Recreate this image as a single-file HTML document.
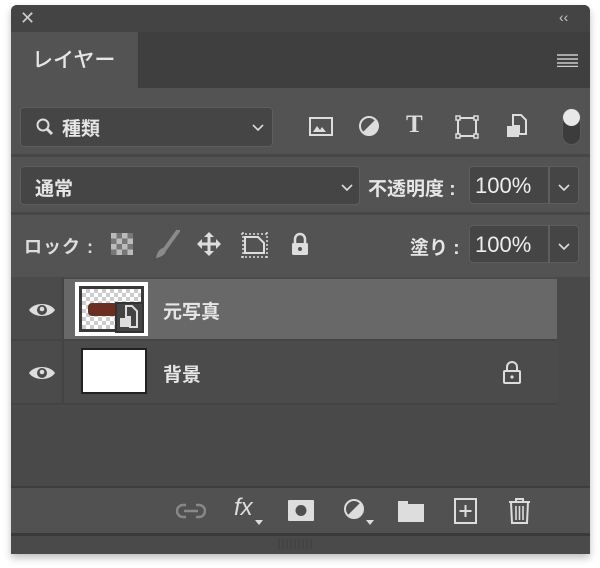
<!DOCTYPE html><html><head><meta charset="utf-8"><style>
*{margin:0;padding:0;box-sizing:border-box}
body{width:600px;height:568px;background:#fff;position:relative;overflow:hidden;font-family:"Liberation Sans","Noto Sans CJK JP",sans-serif;color:#e6e6e6}
.a{position:absolute}
.box{position:absolute;background:#454545;border:1px solid #5e5e5e;border-radius:4px}
.t{position:absolute;font-size:19px;white-space:nowrap;font-weight:500}
svg{position:absolute}
</style></head><body>
<div class="a" style="left:11px;top:5px;width:579px;height:549px;background:#535353;border-radius:6px 6px 0 0;box-shadow:0 4px 8px rgba(0,0,0,.25);overflow:hidden">
 <div class="a" style="left:0;top:0;width:579px;height:27px;background:#444"></div>
 <div class="a" style="left:0;top:27px;width:579px;height:56px;background:#3f3f3f"></div>
 <div class="a" style="left:0;top:27px;width:127px;height:57px;background:#535353"></div>
 <div class="a" style="left:0;top:149px;width:579px;height:3px;background:#474747"></div>
 <div class="a" style="left:0;top:207px;width:579px;height:3px;background:#474747"></div>
 <div class="a" style="left:0;top:272px;width:579px;height:210px;background:#4a494a"></div>
 <div class="a" style="left:0;top:272px;width:546px;height:130px;background:#4c4b4c"></div>
 <div class="a" style="left:53px;top:274px;width:493px;height:60px;background:#686868"></div>
 <div class="a" style="left:0;top:334px;width:546px;height:2px;background:#454445"></div>
 <div class="a" style="left:0;top:398px;width:546px;height:2px;background:#454445"></div>
 <div class="a" style="left:51px;top:272px;width:2px;height:128px;background:#454445"></div>
 <div class="a" style="left:0;top:481px;width:579px;height:50px;background:#525152;border-top:2px solid #3e3e3e;border-bottom:3px solid #3a3a3a"></div>
 <div class="a" style="left:0;top:531px;width:579px;height:18px;background:#4a4a4a"></div>
</div>
<div class="t" style="left:20px;top:8px;font-size:18px;color:#ccc">✕</div>
<div class="t" style="left:559px;top:9px;font-size:14px;color:#ccc">‹‹</div>
<div class="t" style="left:32px;top:44px;font-size:21px">レイヤー</div>
<svg style="left:557px;top:54px" width="21" height="13"><g stroke="#ccc" stroke-width="1.5"><path d="M0 1h21M0 5h21M0 9h21M0 12.5h21"/></g></svg>

<div class="box" style="left:20px;top:107px;width:253px;height:40px"></div>
<svg style="left:35px;top:117px" width="20" height="20"><circle cx="8" cy="8" r="5.5" fill="none" stroke="#ddd" stroke-width="2"/><path d="M12 12l5 5" stroke="#ddd" stroke-width="3"/></svg>
<div class="t" style="left:62px;top:114px;font-weight:bold">種類</div>
<svg style="left:252px;top:124px" width="12" height="8"><path d="M1 1l5 5 5-5" fill="none" stroke="#ddd" stroke-width="1.6"/></svg>
<svg style="left:309px;top:117px" width="24" height="20"><rect x="1" y="1" width="22" height="17" fill="none" stroke="#ddd" stroke-width="2"/><path d="M4 15l4-6 3 4 2-3 4 5z" fill="#ddd"/></svg>
<svg style="left:358px;top:115px" width="22" height="22"><circle cx="11" cy="11" r="9" fill="none" stroke="#ddd" stroke-width="2"/><path d="M17.4 4.6A9 9 0 0 1 4.6 17.4z" fill="#ddd"/></svg>
<div class="t" style="left:406px;top:111px;font-family:'Liberation Serif',serif;font-weight:bold;font-size:25px;color:#ddd">T</div>
<svg style="left:455px;top:115px" width="24" height="24"><rect x="3" y="3" width="18" height="18" fill="none" stroke="#ddd" stroke-width="2"/><g fill="#535353" stroke="#ddd" stroke-width="1.5"><rect x="1" y="1" width="4" height="4"/><rect x="19" y="1" width="4" height="4"/><rect x="1" y="19" width="4" height="4"/><rect x="19" y="19" width="4" height="4"/></g></svg>
<svg style="left:506px;top:114px" width="22" height="24"><path d="M7 1h8l5 5v14H13V12H7z" fill="none" stroke="#ddd" stroke-width="2"/><rect x="1" y="12" width="12" height="11" fill="#ddd"/></svg>
<div class="a" style="left:562px;top:108px;width:19px;height:37px;border-radius:10px;background:#3c3c3c;border:1px solid #5a5a5a"></div>
<div class="a" style="left:563px;top:109px;width:17px;height:17px;border-radius:50%;background:#e8e8e8"></div>

<div class="box" style="left:20px;top:166px;width:340px;height:39px"></div>
<div class="t" style="left:35px;top:174px;font-weight:bold">通常</div>
<svg style="left:341px;top:184px" width="12" height="8"><path d="M1 1l5 5 5-5" fill="none" stroke="#ddd" stroke-width="1.6"/></svg>
<div class="t" style="left:368px;top:174px;font-size:19px;font-weight:bold">不透明度 :</div>
<div class="box" style="left:469px;top:166px;width:110px;height:38px"></div>
<div class="a" style="left:548px;top:167px;width:2px;height:36px;background:#5e5e5e"></div>
<div class="t" style="left:475px;top:173px;font-size:22px;color:#eee">100%</div>
<svg style="left:558px;top:184px" width="12" height="8"><path d="M1 1l5 5 5-5" fill="none" stroke="#ddd" stroke-width="1.6"/></svg>

<div class="t" style="left:24px;top:233px;font-size:18px;color:#ddd;letter-spacing:1px;font-weight:bold">ロック :</div>
<svg style="left:111px;top:233px" width="22" height="22"><rect x="0" y="0" width="22" height="22" fill="#777"/><g fill="#bbb"><rect x="0" y="0" width="5.5" height="5.5"/><rect x="11" y="0" width="5.5" height="5.5"/><rect x="5.5" y="5.5" width="5.5" height="5.5"/><rect x="16.5" y="5.5" width="5.5" height="5.5"/><rect x="0" y="11" width="5.5" height="5.5"/><rect x="11" y="11" width="5.5" height="5.5"/><rect x="5.5" y="16.5" width="5.5" height="5.5"/><rect x="16.5" y="16.5" width="5.5" height="5.5"/></g></svg>
<svg style="left:154px;top:230px" width="26" height="30"><path d="M24 1L11 19" stroke="#8a8a8a" stroke-width="4" stroke-linecap="round"/><path d="M9 18c-4 1-6 5-7 10 5-1 9-3 10-7z" fill="#8a8a8a"/></svg>
<svg style="left:196px;top:231px" width="26" height="26"><g fill="#ddd"><path d="M13 1l5 5h-10zM13 25l5-5h-10zM1 13l5-5v10zM25 13l-5-5v10z"/><rect x="11.5" y="5" width="3" height="16"/><rect x="5" y="11.5" width="16" height="3"/></g></svg>
<svg style="left:240px;top:231px" width="30" height="28"><path d="M5 6h13l6 6v10H5z" fill="none" stroke="#ddd" stroke-width="2"/><g stroke="#ddd" stroke-width="1.5" stroke-dasharray="2 2"><path d="M1 3h28M1 26h28M3 1v26M27 1v26"/></g></svg>
<svg style="left:290px;top:232px" width="20" height="24"><path d="M5 11V7a5 5 0 0 1 10 0v4" fill="none" stroke="#ddd" stroke-width="2.5"/><rect x="2" y="11" width="16" height="12" rx="1.5" fill="#ddd"/><circle cx="10" cy="17" r="2" fill="#535353"/></svg>
<div class="t" style="left:410px;top:233px;font-size:19px;font-weight:bold">塗り :</div>
<div class="box" style="left:469px;top:225px;width:110px;height:38px"></div>
<div class="a" style="left:548px;top:226px;width:2px;height:36px;background:#5e5e5e"></div>
<div class="t" style="left:475px;top:232px;font-size:22px;color:#eee">100%</div>
<svg style="left:558px;top:243px" width="12" height="8"><path d="M1 1l5 5 5-5" fill="none" stroke="#ddd" stroke-width="1.6"/></svg>

<svg style="left:28px;top:300px" width="28" height="20"><path d="M1 10C6 2 22 2 27 10 22 18 6 18 1 10z" fill="#ddd"/><circle cx="14" cy="10" r="5" fill="#4c4b4c"/><circle cx="14" cy="9" r="2.3" fill="#ddd"/></svg>
<svg style="left:28px;top:363px" width="28" height="20"><path d="M1 10C6 2 22 2 27 10 22 18 6 18 1 10z" fill="#ddd"/><circle cx="14" cy="10" r="5" fill="#4c4b4c"/><circle cx="14" cy="9" r="2.3" fill="#ddd"/></svg>

<div class="a" style="left:75px;top:282px;width:73px;height:54px;background:#fff"></div>
<div class="a" style="left:79px;top:286px;width:65px;height:46px;background:#3a3a3a"></div>
<div class="a" style="left:82px;top:289px;width:59px;height:40px;background-color:#fff;background-image:linear-gradient(45deg,#ccc 25%,transparent 25%,transparent 75%,#ccc 75%),linear-gradient(45deg,#ccc 25%,transparent 25%,transparent 75%,#ccc 75%);background-size:8px 8px;background-position:0 0,4px 4px"></div>
<div class="a" style="left:88px;top:303px;width:30px;height:13px;background:#6a2f22;border-radius:4px"></div>
<div class="a" style="left:115px;top:302px;width:29px;height:31px;background:#444;border:2px solid #333"></div>
<svg style="left:118px;top:305px" width="22" height="24"><path d="M8 1h6l5 5v16h-7V12H8z" fill="none" stroke="#ddd" stroke-width="2"/><rect x="2" y="13" width="9" height="9" fill="#ddd"/></svg>
<div class="t" style="left:163px;top:297px;font-weight:bold">元写真</div>

<div class="a" style="left:81px;top:348px;width:66px;height:46px;background:#222"></div>
<div class="a" style="left:83px;top:350px;width:62px;height:42px;background:#fff"></div>
<div class="t" style="left:163px;top:360px;font-weight:bold">背景</div>
<svg style="left:502px;top:360px" width="20" height="24"><path d="M5 11V7a5 5 0 0 1 10 0v4" fill="none" stroke="#ddd" stroke-width="2"/><rect x="2" y="11" width="16" height="12" rx="1" fill="none" stroke="#ddd" stroke-width="2"/><circle cx="10" cy="17" r="1.6" fill="#ddd"/></svg>

<svg style="left:176px;top:503px" width="30" height="16"><path d="M10 2H7a6 6 0 0 0 0 12h3M20 2h3a6 6 0 0 1 0 12h-3M8 8h14" fill="none" stroke="#888" stroke-width="2.5"/></svg>
<div class="t" style="left:234px;top:494px;font-style:italic;font-size:24px;color:#ddd;font-weight:normal">fx</div>
<svg style="left:255px;top:520px" width="8" height="5"><path d="M0 0h8L4 5z" fill="#ddd"/></svg>
<svg style="left:288px;top:500px" width="26" height="21"><rect width="26" height="21" rx="1" fill="#ddd"/><circle cx="13" cy="10.5" r="5.5" fill="#4f4f4f"/></svg>
<svg style="left:343px;top:498px" width="22" height="24"><circle cx="11" cy="11" r="9" fill="none" stroke="#ddd" stroke-width="2"/><path d="M17.4 4.6A9 9 0 0 1 4.6 17.4z" fill="#ddd"/></svg>
<svg style="left:366px;top:520px" width="8" height="5"><path d="M0 0h8L4 5z" fill="#ddd"/></svg>
<svg style="left:398px;top:500px" width="26" height="22"><path d="M0 1h10v3h16v18H0z" fill="#ddd"/></svg>
<svg style="left:454px;top:498px" width="23" height="26"><rect x="1" y="1" width="21" height="24" fill="none" stroke="#ddd" stroke-width="2"/><path d="M11.5 7v12M5.5 13h12" stroke="#ddd" stroke-width="2"/></svg>
<svg style="left:508px;top:497px" width="23" height="28"><path d="M1 5h21M8 5V2h7v3M3 5l1 21h15l1-21" fill="none" stroke="#ddd" stroke-width="2"/><path d="M8 9v14M11.5 9v14M15 9v14" stroke="#ddd" stroke-width="1.6"/></svg>
<svg style="left:278px;top:539px" width="34" height="10"><g stroke="#3e3e3e" stroke-width="1"><path d="M1 0v10M5 0v10M9 0v10M13 0v10M17 0v10M21 0v10M25 0v10M29 0v10M33 0v10"/></g></svg>
</body></html>
